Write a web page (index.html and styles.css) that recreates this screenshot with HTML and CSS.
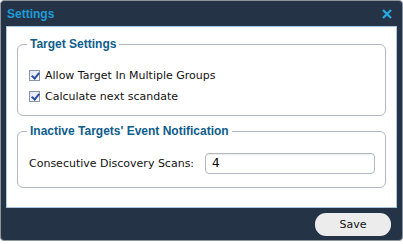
FILE: index.html
```html
<!DOCTYPE html>
<html lang="en">
<head>
    <meta charset="UTF-8">
    <title>Settings</title>
    <link rel="stylesheet" href="styles.css">
</head>
<body>
    <div class="window">
        <div class="titlebar">
            <span class="title">Settings</span>
            <svg class="close" width="10" height="10" viewBox="0 0 10 10">
                <path d="M1 1 L9 9 M9 1 L1 9" stroke="#2aa6e0" stroke-width="2.4" fill="none"/>
            </svg>
        </div>

        <div class="content">
            <fieldset class="group">
                <legend>Target Settings</legend>
                <label class="check"><span class="box"></span>Allow Target In Multiple Groups</label>
                <label class="check"><span class="box"></span>Calculate next scandate</label>
            </fieldset>

            <fieldset class="group group-scans">
                <legend>Inactive Targets' Event Notification</legend>
                <div class="row">
                    <span class="row-label">Consecutive Discovery Scans:</span>
                    <span class="input">4</span>
                </div>
            </fieldset>
        </div>

        <div class="footer">
            <button class="btn">Save</button>
        </div>
    </div>
</body>
</html>
```

FILE: styles.css
```css
body {
    margin: 0;
    padding: 0;
    background: #fff;
    font-family: 'DejaVu Sans', sans-serif;
}

.window {
    width: 401px;
    height: 239px;
    border: 1px solid #8e959d;
    border-radius: 4px;
    background: #243446;
    display: flex;
    flex-direction: column;
    overflow: hidden;
}

.titlebar {
    height: 25px;
    flex-shrink: 0;
    display: flex;
    align-items: center;
    justify-content: space-between;
    padding: 0 10px 0 6px;
}

.title {
    color: #1f9bd7;
    font-family: 'Liberation Sans', sans-serif;
    font-weight: bold;
    font-size: 12px;
}

.content {
    background: #fff;
    margin: 0 5px;
    border: 1px solid #a9c6e3;
    box-sizing: border-box;
    height: 182px;
    flex-shrink: 0;
    padding: 10px 10px 0 10px;
}

.group {
    margin: 0;
    border: 1px solid #b3b6c3;
    border-radius: 6px;
    padding: 14px 10px 11px 11px;
    height: 52px;
}

.group legend {
    color: #0e5d8d;
    font-family: 'Liberation Sans', sans-serif;
    font-weight: bold;
    font-size: 12px;
    padding: 0 3px;
    margin-left: -2px;
}

.group-scans {
    margin-top: 8px;
    height: 36px;
    padding-top: 15px;
    padding-bottom: 11px;
}

.check {
    display: flex;
    align-items: center;
    gap: 5px;
    font-size: 11px;
    color: #111;
    height: 21px;
}

.box {
    width: 11px;
    height: 11px;
    border: 1px solid #8a94a6;
    background: linear-gradient(135deg, #dfe4ee, #fdfdfe);
    box-sizing: border-box;
    position: relative;
}

.box::after {
    content: "";
    position: absolute;
    left: 3px;
    top: 0px;
    width: 3px;
    height: 6px;
    border: solid #2c4fa0;
    border-width: 0 2px 2px 0;
    transform: rotate(40deg);
}

.row {
    display: flex;
    align-items: center;
    justify-content: space-between;
}

.row-label {
    font-size: 11px;
    color: #111;
}

.input {
    width: 162px;
    height: 19px;
    border: 1px solid #b4b8c2;
    border-radius: 4px;
    font-size: 12px;
    line-height: 19px;
    padding-left: 6px;
    box-shadow: inset 0 1px 1px rgba(0, 0, 0, 0.08);
}

.footer {
    flex: 1;
    display: flex;
    justify-content: flex-end;
    align-items: center;
    padding-right: 11px;
}

.btn {
    width: 76px;
    height: 23px;
    border: none;
    border-radius: 11px;
    background: #ececec;
    font-family: 'DejaVu Sans', sans-serif;
    font-size: 11px;
    color: #111;
    padding: 0;
}
```
